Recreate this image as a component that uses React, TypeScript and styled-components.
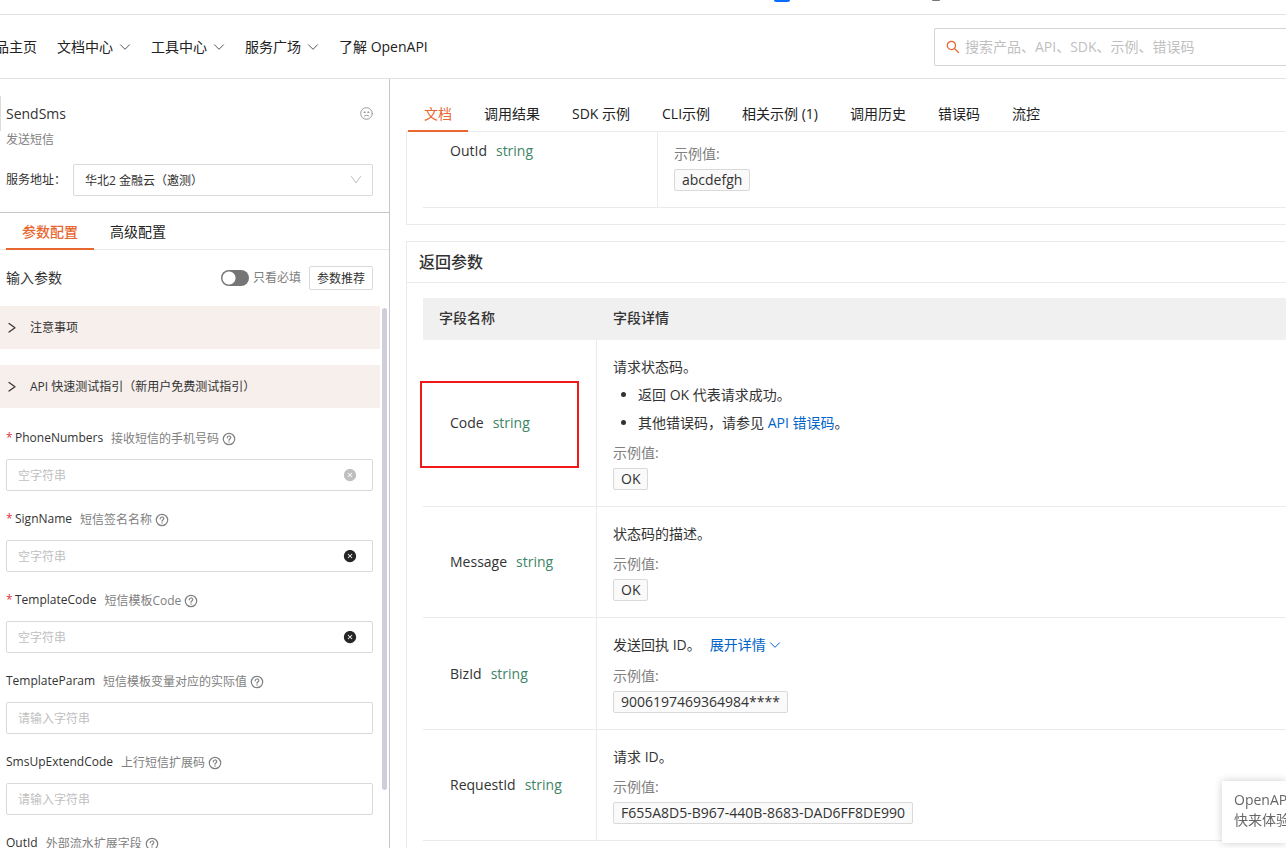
import React, { useState } from "react";
import styled, { createGlobalStyle, css } from "styled-components";
import { AiFillCloseCircle, AiOutlineSearch } from "react-icons/ai";

const color = {
  text: "#333333",
  muted: "#808080",
  placeholder: "#bfbfbf",
  border: "#d9d9d9",
  line: "#ebebeb",
  divider: "#c4c7cc",
  accent: "#e8662f",
  type: "#3e8566",
  link: "#0064c8",
};

const Global = createGlobalStyle`
  *, *::before, *::after { box-sizing: border-box; }
  body {
    margin: 0;
    background: #fff;
    color: ${color.text};
    font: 14px/22px "Open Sans", "Noto Sans CJK SC", sans-serif;
    overflow: hidden;
  }
  button, input, select { font: inherit; color: inherit; }
  h1, h2, p, ul { margin: 0; padding: 0; font-weight: 400; }
  svg { flex: none; }
`;

const Page = styled.div`
  display: flex;
  flex-direction: column;
  height: 100vh;
`;

/* Lower edge of the bar above the site header */
const TopBar = styled.div`
  display: flex;
  flex: none;
  align-items: flex-start;
  gap: 142px;
  height: 15px;
  padding-left: 774px;
  border-bottom: 1px solid #e3e3e3;
`;

const BarMark = styled.span<{ $tint: string; $w: number; $h: number }>`
  width: ${(p) => p.$w}px;
  height: ${(p) => p.$h}px;
  border-radius: 0 0 4px 4px;
  background: ${(p) => p.$tint};
`;

const Header = styled.header`
  display: flex;
  flex: none;
  align-items: center;
  justify-content: space-between;
  height: 64px;
  border-bottom: 1px solid #e3e3e3;
  overflow: hidden;
`;

const Nav = styled.nav`
  display: flex;
  gap: 20px;
  margin-left: -19px;
`;

const NavLink = styled.a`
  display: flex;
  align-items: center;
  gap: 6px;
  color: #222;
  text-decoration: none;
  white-space: nowrap;
  svg { color: #555; }
`;

const SearchBox = styled.label`
  display: flex;
  align-items: center;
  gap: 4px;
  width: 352px;
  height: 38px;
  padding-left: 10px;
  border: 1px solid #d4d4d4;
  border-right: 0;
  border-radius: 2px 0 0 2px;
  color: ${color.accent};
`;

const BareInput = styled.input`
  flex: 1;
  min-width: 0;
  padding: 0;
  border: 0;
  outline: 0;
  background: none;
  color: ${color.text};
  &::placeholder { color: ${color.placeholder}; opacity: 1; }
`;

const Body = styled.div`
  display: flex;
  flex: 1;
  min-height: 0;
`;

const Sidebar = styled.aside`
  display: flex;
  flex: none;
  flex-direction: column;
  width: 390px;
  border-right: 1px solid ${color.divider};
`;

const ApiHead = styled.div`
  display: flex;
  flex-direction: column;
  padding: 17px 16px 16px 0;
  border-bottom: 1px solid ${color.divider};
`;

const ApiTitle = styled.div`
  display: flex;
  align-items: center;
  justify-content: space-between;
  height: 35px;
  padding-left: 5px;
  border-left: 1px solid #dcdcdc;
  color: #999;
`;

const ApiName = styled.h1`
  font-size: 14px;
  color: ${color.text};
`;

const ApiSummary = styled.p`
  padding-left: 6px;
  font-size: 12px;
  line-height: 17px;
  color: ${color.muted};
`;

const EndpointRow = styled.div`
  display: flex;
  align-items: center;
  justify-content: space-between;
  margin-top: 16px;
  padding-left: 6px;
  font-size: 12px;
`;

const SelectBox = styled.span`
  position: relative;
  width: 300px;
  color: ${color.placeholder};
  svg {
    position: absolute;
    right: 10px;
    top: 9px;
    pointer-events: none;
  }
`;

const Select = styled.select`
  display: block;
  width: 100%;
  height: 32px;
  padding: 1px 11px 0;
  border: 1px solid ${color.border};
  border-radius: 2px;
  appearance: none;
  background: #fff;
  color: ${color.text};
`;

const TabList = styled.div<{ $inset: number; $height: number }>`
  display: flex;
  flex: none;
  align-items: flex-end;
  height: ${(p) => p.$height}px;
  padding-left: ${(p) => p.$inset}px;
  box-shadow: inset 0 -1px ${color.line};
`;

const Tab = styled.button<{ $bold?: boolean }>`
  height: 36px;
  padding: 2px 16px 0;
  border: 0;
  border-bottom: 2px solid transparent;
  background: none;
  color: #222;
  white-space: nowrap;
  &[aria-selected="true"] {
    border-color: ${color.accent};
    color: ${color.accent};
    ${(p) => p.$bold && css`font-weight: 500;`}
  }
`;

const ParamsBar = styled.div`
  display: flex;
  flex: none;
  align-items: center;
  gap: 8px;
  height: 56px;
  padding: 0 16px 0 6px;
`;

const ParamsTitle = styled.h2`
  flex: 1;
  font-size: 14px;
`;

const SwitchLabel = styled.label`
  display: flex;
  align-items: center;
  gap: 4px;
  font-size: 12px;
  line-height: 24px;
  color: ${color.muted};
`;

const Switch = styled.input`
  width: 28px;
  height: 16px;
  margin: 0;
  border-radius: 8px;
  appearance: none;
  background: radial-gradient(circle at 8px 8px, #fff 6px, transparent 7px) #757575;
  &:checked {
    background: radial-gradient(circle at 20px 8px, #fff 6px, transparent 7px) ${color.accent};
  }
`;

const SmallButton = styled.button`
  width: 64px;
  height: 24px;
  padding: 1px 0 0;
  border: 1px solid ${color.border};
  border-radius: 2px;
  background: #fff;
  font-size: 12px;
`;

const ScrollArea = styled.div`
  display: flex;
  flex: 1;
  min-height: 0;
  overflow: hidden;
`;

const ParamsForm = styled.form`
  display: flex;
  flex: none;
  flex-direction: column;
  width: 380px;
`;

const ScrollThumb = styled.div`
  width: 5px;
  height: 89%;
  margin: 2px 0 0 2px;
  border-radius: 3px;
  background: #cfcfdb;
`;

const Notice = styled.button`
  display: flex;
  flex: none;
  align-items: center;
  gap: 12px;
  height: 43px;
  margin-bottom: 16px;
  padding: 0 6px;
  border: 0;
  background: #f6efec;
  font-size: 12px;
  &:nth-of-type(2) { margin-bottom: 20px; }
`;

const Field = styled.div`
  display: flex;
  flex: none;
  flex-direction: column;
  gap: 11px;
  padding: 0 7px 18px 6px;
`;

const FieldLabel = styled.label`
  display: flex;
  align-items: center;
  height: 20px;
  font-size: 12px;
`;

const Star = styled.span`
  width: 9px;
  color: #d9363e;
`;

const FieldHint = styled.span`
  display: flex;
  align-items: center;
  gap: 3px;
  margin-left: 8px;
  padding-top: 1px;
  color: ${color.muted};
`;

const FieldInput = styled.div`
  display: flex;
  align-items: center;
  height: 32px;
  padding: 0 15px 0 11px;
  border: 1px solid ${color.border};
  border-radius: 2px;
  font-size: 12px;
  input { padding-top: 1px; }
`;

const ClearButton = styled.button<{ $faded?: boolean }>`
  display: flex;
  padding: 0;
  border: 0;
  background: none;
  color: ${(p) => (p.$faded ? "#bfbfbf" : "#262626")};
`;

const Main = styled.main`
  display: flex;
  flex: 1;
  flex-direction: column;
  min-width: 0;
  padding-left: 16px;
  overflow: hidden;
`;

const Card = styled.section`
  flex: none;
  margin-bottom: 16px;
  border: 1px solid ${color.line};
  border-right: 0;
  &:first-of-type { border-top: 0; }
`;

const CardTitle = styled.h2`
  height: 41px;
  padding-left: 12px;
  border-bottom: 1px solid ${color.line};
  font-size: 16px;
  font-weight: 500;
  line-height: 40px;
`;

const CardBody = styled.div<{ $top: number }>`
  padding: ${(p) => p.$top}px 0 16px 16px;
`;

const Table = styled.table<{ $first: number }>`
  width: 100%;
  border-spacing: 0;
  table-layout: fixed;
  th:first-child, td:first-child { width: ${(p) => p.$first}px; }
`;

const HeadCell = styled.th`
  height: 42px;
  padding: 0 16px 2px;
  background: #f0f0f0;
  font-weight: 500;
  text-align: left;
`;

const NameCell = styled.td<{ $cut?: boolean }>`
  position: relative;
  padding: ${(p) => (p.$cut ? "8px 0 0 27px" : "0 0 0 27px")};
  border-right: 1px solid ${color.line};
  border-bottom: 1px solid ${color.line};
  vertical-align: ${(p) => (p.$cut ? "top" : "middle")};
  white-space: nowrap;
`;

const DetailCell = styled.td<{ $cut?: boolean }>`
  padding: ${(p) => (p.$cut ? "11px 16px 16px" : "16px")};
  border-bottom: 1px solid ${color.line};
`;

const TypeName = styled.span`
  margin-left: 9px;
  color: ${color.type};
`;

const Highlight = styled.span`
  position: absolute;
  inset: 41px 17px 38px -3px;
  border: 2px solid #f01818;
`;

const Description = styled.div`
  display: flex;
  flex-direction: column;
  gap: 6px;
  margin-bottom: 8px;
`;

const DescriptionLine = styled.p`
  display: flex;
  gap: 9px;
`;

const BulletList = styled.ul`
  display: flex;
  flex-direction: column;
  gap: 6px;
  padding-left: 25px;
`;

const Anchor = styled.a`
  color: ${color.link};
  text-decoration: none;
`;

const ExpandButton = styled.button`
  display: flex;
  align-items: center;
  gap: 3px;
  height: 23px;
  padding: 0 0 1px;
  border: 0;
  background: none;
  color: ${color.link};
`;

const ExampleLabel = styled.p`
  margin-bottom: 4px;
  color: ${color.muted};
`;

const Example = styled.code`
  display: block;
  width: fit-content;
  height: 22px;
  padding: 0 7px;
  border: 1px solid ${color.border};
  border-radius: 2px;
  background: #fafafa;
  font-family: inherit;
  line-height: 20px;
`;

const Toast = styled.div`
  position: fixed;
  right: 0;
  bottom: 5px;
  width: 64px;
  padding: 9px 0 13px 12px;
  overflow: hidden;
  background: #fff;
  box-shadow: 0 0 8px rgba(0, 0, 0, 0.2);
  line-height: 20px;
  white-space: nowrap;
  color: #666;
`;

const stroke = { fill: "none", stroke: "currentColor", strokeLinecap: "round", strokeLinejoin: "round" } as const;

function ChevronDown() {
  return (
    <svg width="12" height="12" viewBox="0 0 12 12" aria-hidden="true" {...stroke}>
      <path d="M1.5 3.8 6 8.3l4.5-4.5" />
    </svg>
  );
}

function ChevronWide() {
  return (
    <svg width="14" height="14" viewBox="0 0 14 14" aria-hidden="true" {...stroke}>
      <path d="M2.5 3.5 7 10l4.5-6.5" />
    </svg>
  );
}

function ChevronRight() {
  return (
    <svg width="12" height="12" viewBox="0 0 12 12" aria-hidden="true" {...stroke} strokeWidth="1.2">
      <path d="M3 1.5 9 5.8 3 10.1" />
    </svg>
  );
}

function FaceIcon() {
  return (
    <svg width="13" height="13" viewBox="0 0 13 13" aria-hidden="true" {...stroke}>
      <circle cx="6.5" cy="6.5" r="5.8" />
      <path d="M4.2 5.2h.9M7.9 5.2h.9" strokeWidth="1.5" />
      <path d="M4.3 9c1.2-.9 3.2-.9 4.4 0" />
    </svg>
  );
}

function HelpIcon() {
  return (
    <svg width="14" height="14" viewBox="0 0 14 14" aria-hidden="true" {...stroke}>
      <circle cx="7" cy="7" r="5.7" strokeWidth="1.2" />
      <path d="M5.2 5.8c0-2.4 3.6-2.4 3.6-.2 0 1.4-1.8 1.3-1.8 2.6" strokeWidth="1.2" />
      <path d="M7 10v.1" strokeWidth="1.4" />
    </svg>
  );
}

const navItems = [
  { label: "产品主页" },
  { label: "文档中心", menu: true },
  { label: "工具中心", menu: true },
  { label: "服务广场", menu: true },
  { label: "了解 OpenAPI" },
];

const fields = [
  { name: "PhoneNumbers", hint: "接收短信的手机号码", required: true, faded: true },
  { name: "SignName", hint: "短信签名名称", required: true },
  { name: "TemplateCode", hint: "短信模板Code", required: true },
  { name: "TemplateParam", hint: "短信模板变量对应的实际值" },
  { name: "SmsUpExtendCode", hint: "上行短信扩展码" },
  { name: "OutId", hint: "外部流水扩展字段" },
];

const docTabs = ["文档", "调用结果", "SDK 示例", "CLI示例", "相关示例 (1)", "调用历史", "错误码", "流控"];
const configTabs = ["参数配置", "高级配置"];

type Row = { name: string; example: string; highlight?: boolean; description: React.ReactNode };

const rows: Row[] = [
  {
    name: "Code",
    example: "OK",
    highlight: true,
    description: (
      <>
        <p>请求状态码。</p>
        <BulletList>
          <li>返回 OK 代表请求成功。</li>
          <li>
            其他错误码，请参见 <Anchor href="#errors">API 错误码</Anchor>。
          </li>
        </BulletList>
      </>
    ),
  },
  { name: "Message", example: "OK", description: <p>状态码的描述。</p> },
  {
    name: "BizId",
    example: "9006197469364984****",
    description: (
      <DescriptionLine as="div">
        发送回执 ID。
        <ExpandButton type="button">
          展开详情
          <ChevronDown />
        </ExpandButton>
      </DescriptionLine>
    ),
  },
  { name: "RequestId", example: "F655A8D5-B967-440B-8683-DAD6FF8DE990", description: <p>请求 ID。</p> },
];

function Tabs({ items, inset, height, bold }: { items: string[]; inset: number; height: number; bold?: boolean }) {
  const [active, setActive] = useState(0);
  return (
    <TabList role="tablist" $inset={inset} $height={height}>
      {items.map((item, i) => (
        <Tab key={item} type="button" role="tab" aria-selected={i === active} $bold={bold} onClick={() => setActive(i)}>
          {item}
        </Tab>
      ))}
    </TabList>
  );
}

export default function App() {
  return (
    <Page lang="zh-CN">
      <Global />
      <TopBar>
        <BarMark $tint="#0a6cff" $w={16} $h={2} />
        <BarMark $tint="#777777" $w={8} $h={1} />
      </TopBar>
      <Header>
        <Nav>
          {navItems.map((item) => (
            <NavLink key={item.label} href="#nav">
              {item.label}
              {item.menu && <ChevronDown />}
            </NavLink>
          ))}
        </Nav>
        <SearchBox>
          <AiOutlineSearch size={16} />
          <BareInput type="text" aria-label="搜索" placeholder="搜索产品、API、SDK、示例、错误码" />
        </SearchBox>
      </Header>
      <Body>
        <Sidebar>
          <ApiHead>
            <ApiTitle>
              <ApiName>SendSms</ApiName>
              <FaceIcon />
            </ApiTitle>
            <ApiSummary>发送短信</ApiSummary>
            <EndpointRow>
              <label htmlFor="endpoint">服务地址：</label>
              <SelectBox>
                <Select id="endpoint">
                  <option>华北2 金融云（邀测）</option>
                </Select>
                <ChevronWide />
              </SelectBox>
            </EndpointRow>
          </ApiHead>
          <Tabs items={configTabs} inset={6} height={37} bold />
          <ParamsBar>
            <ParamsTitle>输入参数</ParamsTitle>
            <SwitchLabel>
              <Switch type="checkbox" role="switch" />
              只看必填
            </SwitchLabel>
            <SmallButton type="button">参数推荐</SmallButton>
          </ParamsBar>
          <ScrollArea>
            <ParamsForm>
              <Notice type="button">
                <ChevronRight />
                注意事项
              </Notice>
              <Notice type="button">
                <ChevronRight />
                API 快速测试指引（新用户免费测试指引）
              </Notice>
              {fields.map((f) => (
                <Field key={f.name}>
                  <FieldLabel htmlFor={f.name}>
                    {f.required && <Star>*</Star>}
                    {f.name}
                    <FieldHint>
                      {f.hint}
                      <HelpIcon />
                    </FieldHint>
                  </FieldLabel>
                  <FieldInput>
                    <BareInput id={f.name} type="text" placeholder={f.required ? "空字符串" : "请输入字符串"} />
                    {f.required && (
                      <ClearButton type="button" aria-label="清除" $faded={f.faded}>
                        <AiFillCloseCircle size={14} />
                      </ClearButton>
                    )}
                  </FieldInput>
                </Field>
              ))}
            </ParamsForm>
            <ScrollThumb />
          </ScrollArea>
        </Sidebar>
        <Main>
          <Tabs items={docTabs} inset={2} height={53} />
          <Card>
            <CardBody $top={0}>
              <Table $first={235}>
                <tbody>
                  <tr>
                    <NameCell $cut>
                      OutId<TypeName>string</TypeName>
                    </NameCell>
                    <DetailCell $cut>
                      <ExampleLabel>示例值:</ExampleLabel>
                      <Example>abcdefgh</Example>
                    </DetailCell>
                  </tr>
                </tbody>
              </Table>
            </CardBody>
          </Card>
          <Card>
            <CardTitle>返回参数</CardTitle>
            <CardBody $top={15}>
              <Table $first={174}>
                <thead>
                  <tr>
                    <HeadCell>字段名称</HeadCell>
                    <HeadCell>字段详情</HeadCell>
                  </tr>
                </thead>
                <tbody>
                  {rows.map((row) => (
                    <tr key={row.name}>
                      <NameCell>
                        {row.name}
                        <TypeName>string</TypeName>
                        {row.highlight && <Highlight />}
                      </NameCell>
                      <DetailCell>
                        <Description>{row.description}</Description>
                        <ExampleLabel>示例值:</ExampleLabel>
                        <Example>{row.example}</Example>
                      </DetailCell>
                    </tr>
                  ))}
                </tbody>
              </Table>
            </CardBody>
          </Card>
        </Main>
      </Body>
      <Toast>
        OpenAPI
        <br />
        快来体验
      </Toast>
    </Page>
  );
}
